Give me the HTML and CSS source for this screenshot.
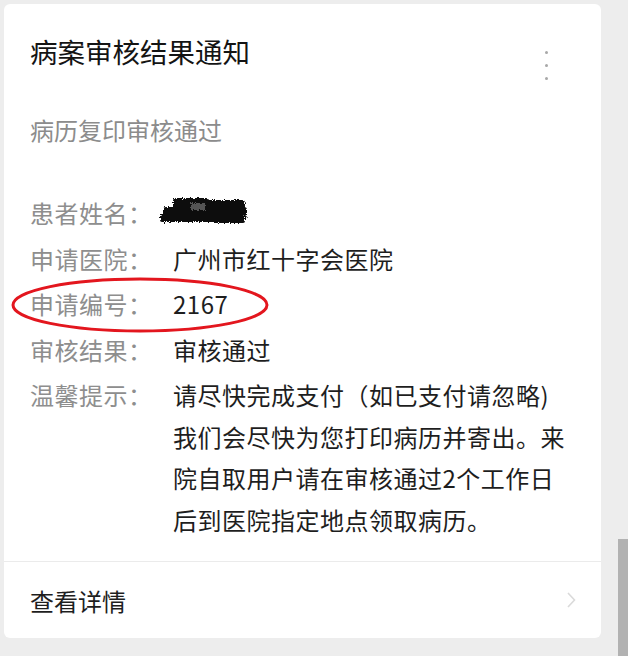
FILE: index.html
```html
<!DOCTYPE html>
<html lang="zh-CN">
<head>
  <meta charset="UTF-8">
  <title>病案审核结果通知</title>
  <meta name="viewport" content="width=device-width, initial-scale=1.0">
  <link rel="stylesheet" href="styles.css">
</head>
<body>
  <div class="pagina">
    <div class="tarjeta">
      <div class="cuerpo">
        <div class="cabecera">
          <h1>病案审核结果通知</h1>
          <div class="menu"><span></span><span></span><span></span></div>
        </div>
        <p class="resumen">病历复印审核通过</p>

        <div class="filas">
          <div class="fila">
            <span class="etiqueta">患者姓名：</span>
            <span class="valor">
              <svg class="tachado" width="96" height="36" viewBox="0 0 96 36">
                <defs>
                  <filter id="ruido" x="-10%" y="-20%" width="120%" height="140%">
                    <feTurbulence type="fractalNoise" baseFrequency="0.8" numOctaves="2" seed="4"/>
                    <feDisplacementMap in="SourceGraphic" scale="5"/>
                  </filter>
                </defs>
                <g filter="url(#ruido)" fill="#0d0d0d">
                  <rect x="16" y="5" width="36" height="14" rx="3"/>
                  <rect x="44" y="7" width="44" height="12" rx="3"/>
                  <rect x="6" y="14" width="84" height="11" rx="3"/>
                  <rect x="3" y="21" width="62" height="8" rx="2"/>
                  <rect x="56" y="20" width="32" height="10" rx="2"/>
                  <rect x="34" y="10" width="14" height="7" fill="#555"/>
                </g>
              </svg>
            </span>
          </div>
          <div class="fila">
            <span class="etiqueta">申请医院：</span>
            <span class="valor">广州市红十字会医院</span>
          </div>
          <div class="fila marcada">
            <span class="etiqueta">申请编号：</span>
            <span class="valor">2167</span>
            <svg class="circulo" width="262" height="58" viewBox="0 0 262 58">
              <ellipse cx="131" cy="29" rx="127" ry="26" fill="none" stroke="#e3161e" stroke-width="3"/>
            </svg>
          </div>
          <div class="fila">
            <span class="etiqueta">审核结果：</span>
            <span class="valor">审核通过</span>
          </div>
          <div class="fila">
            <span class="etiqueta">温馨提示：</span>
            <span class="valor">请尽快完成支付（如已支付请忽略)<br>我们会尽快为您打印病历并寄出。来<br>院自取用户请在审核通过2个工作日<br>后到医院指定地点领取病历。</span>
          </div>
        </div>
      </div>

      <div class="pie">
        <span>查看详情</span>
        <svg class="flecha" width="12" height="20" viewBox="0 0 12 20">
          <path d="M3 3 L9.5 10 L3 17" fill="none" stroke="#dadada" stroke-width="1.6"/>
        </svg>
      </div>
    </div>

    <div class="margen">
      <div class="barra"></div>
    </div>
  </div>
</body>
</html>
```

FILE: styles.css
```css
body {
  margin: 0;
  background: #ededed;
  font-family: "Noto Sans CJK SC", "Noto Sans", sans-serif;
}
.pagina {
  display: flex;
  height: 656px;
}
.tarjeta {
  width: 597px;
  height: 634px;
  margin: 4px 0 0 4px;
  background: white;
  border-radius: 6px;
  display: flex;
  flex-direction: column;
}
.cuerpo {
  flex: 1;
  padding: 28px 26px 0;
}
.cabecera {
  height: 38px;
  display: flex;
  justify-content: space-between;
  align-items: flex-start;
}
.cabecera h1 {
  margin: 0;
  font-size: 27.5px;
  line-height: 38px;
  font-weight: normal;
  color: #141414;
}
.menu {
  display: flex;
  flex-direction: column;
  gap: 10px;
  margin: 19px 27px 0 0;
}
.menu span {
  width: 3px;
  height: 3px;
  border-radius: 50%;
  background: #a8a8a8;
}
.resumen {
  margin: 43px 0 0;
  font-size: 24px;
  line-height: 34px;
  color: #8c8c8c;
}
.filas {
  margin-top: 45px;
  display: flex;
  flex-direction: column;
  gap: 4px;
}
.fila {
  display: flex;
  font-size: 24px;
  letter-spacing: 0.5px;
  line-height: 41.5px;
}
.etiqueta {
  width: 143px;
  flex-shrink: 0;
  color: #8e8e8e;
}
.valor {
  color: #1e1e1e;
}
.tachado {
  display: block;
  margin: 1px 0 0 -16px;
}
.marcada {
  position: relative;
}
.circulo {
  position: absolute;
  left: -21px;
  top: -7px;
}
.pie {
  height: 76px;
  border-top: 1px solid #ebebeb;
  padding: 0 24px 0 26px;
  display: flex;
  align-items: center;
  justify-content: space-between;
  font-size: 24px;
  color: #1e1e1e;
}
.margen {
  flex: 1;
  display: flex;
  justify-content: flex-end;
  align-items: flex-end;
}
.barra {
  width: 10px;
  height: 117px;
  background: #b2b2b2;
}
```
